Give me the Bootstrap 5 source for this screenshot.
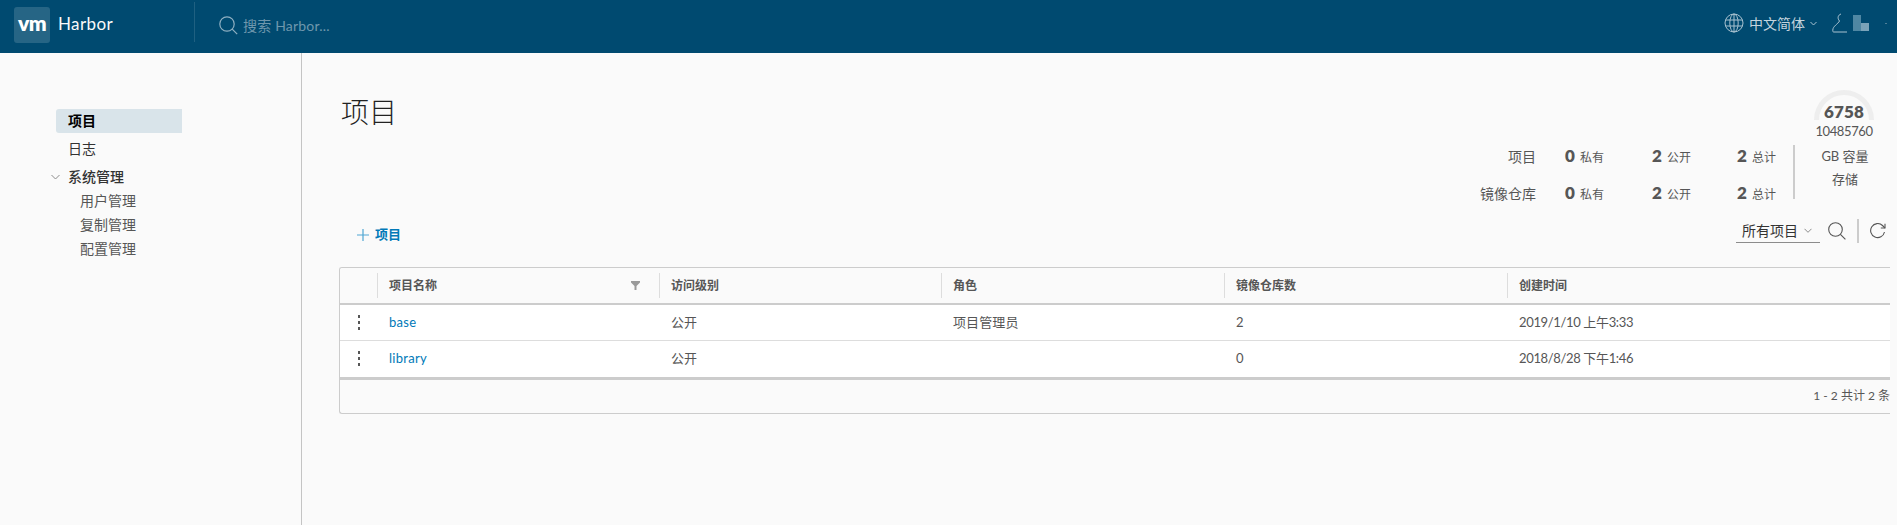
<!DOCTYPE html>
<html lang="zh">
<head>
<meta charset="utf-8">
<title>Harbor</title>
<link rel="stylesheet" href="https://cdn.jsdelivr.net/npm/bootstrap@5.3.0/dist/css/bootstrap.min.css">
<style>
html,body{height:525px;overflow:hidden}
body{background:#fafafa;color:#565656;font-family:Lato,"Noto Sans CJK SC",sans-serif;font-size:14px}
svg{display:block;flex:none}
.hb-top{height:53px;background:#004a70;padding:0}
.hb-logo{width:36px;height:36px;margin:5px 0 5px 14px;background:rgba(255,255,255,.15);border-radius:3px;color:#fff;font:800 21px/32px Lato,sans-serif;letter-spacing:-.5px;text-align:center}
.hb-name{margin-left:8px;color:#fafafa;font-size:17px;line-height:53px;width:136px;letter-spacing:.4px;margin-top:-3px}
.hb-vline{width:1px;height:40px;background:rgba(255,255,255,.12);margin-top:-6px}
.hb-search{margin-left:24px;color:#6e97ad;gap:5px;font-size:14px;letter-spacing:.2px}
.hb-lang{color:#c4d5de;gap:5px;font-size:14px}
.hb-user{margin-left:15px}
.hb-redact{width:16px;height:16px;margin-left:6px;display:grid;grid-template-columns:8px 8px;grid-template-rows:8px 8px}
.hb-redact i:nth-child(1){background:#4f87a3;grid-row:1/3}
.hb-redact i:nth-child(2){background:#004a70}
.hb-redact i:nth-child(3){background:#7aa3b9}
.hb-dot{width:2px;height:1px;background:#4f7f98;margin-left:16px;margin-right:10px}
.hb-wrap{height:472px}
.hb-side{width:302px;flex:none;border-right:1px solid #c4c4c4;padding:56px 0 0 56px}
.hb-link{display:block;height:24px;line-height:24px;padding-left:12px;width:126px;color:#333;text-decoration:none;font-size:14px;border-radius:3px 0 0 3px}
.hb-link.on{background:#d9e4ea;color:#000;font-weight:700}
.hb-link.gap{margin-top:4px}
.hb-link.sub{padding-left:24px;color:#565656}
.hb-group{margin-left:-5px;gap:8px;padding-left:0;font-weight:500}
.hb-main{flex:1;min-width:0;padding:36px 0 0 36px;overflow:hidden}
.hb-title{font-size:28px;font-weight:300;color:#222;line-height:40px;margin:3px 0 0 3px}
.hb-right{margin-right:2px}
.hb-gauge{position:relative;width:102px;height:56px;text-align:center}
.hb-gauge b{position:absolute;left:0;right:0;top:13px;font-size:17px;line-height:20px;color:#565656;font-weight:800;letter-spacing:.2px}
.hb-gauge span{position:absolute;left:0;right:0;top:33px;font-size:13px;line-height:18px;letter-spacing:-.4px}
.hb-stats{display:grid;grid-template-columns:129px 87px 85px 56px;grid-auto-rows:22px;row-gap:15px;width:357px}
.hb-stats .lb{padding-right:29px;text-align:right;font-size:14px;line-height:24px}
.hb-stats .ct{display:flex;align-items:baseline;gap:5px;font-size:12px;line-height:22px}
.hb-stats .ct b{font-size:17px;font-weight:800;width:10px}
.hb-cap{width:102px;height:54px;border-left:2px solid #ccc;text-align:center;font-size:13px;line-height:23px}
.hb-tools{height:24px;margin-top:15px;padding:0 11px 0 19px}
.hb-add{color:#0079b8;font-size:13px;font-weight:700;gap:6px;text-decoration:none;margin-top:8px}
.hb-sel{width:84px;height:23px;border-bottom:1px solid #8c8c8c;color:#333;font-size:14px;padding-left:6px;gap:6px;line-height:21px;margin-right:8px}
.hb-sep{width:2px;height:24px;background:#ccc;margin:0 11px 0 11px}
.hb-tablewrap{margin:24px 7px 0 1px;border:1px solid #ccc;border-right:0;border-radius:3px 0 0 3px;height:147px;overflow:hidden}
.table.hb-grid{table-layout:fixed;width:1550px;margin:0;--bs-table-bg:transparent;--bs-table-color:#565656;font-size:13px}
.table.hb-grid>*>*>*{padding:0;border:0;vertical-align:middle}
.table.hb-grid>thead>tr>th{height:36px;background:#fafafa;border-bottom:2px solid #ccc;font-size:12px;font-weight:700;color:#565656}
.hb-grid thead th div{height:25px;padding-left:11px;line-height:25px;border-left:1px solid #ddd;display:flex;justify-content:space-between;align-items:center}
.table.hb-grid>tbody>tr>td{height:36px;background:#fff;border-bottom:1px solid #ddd;padding-left:12px;letter-spacing:.1px}
.table.hb-grid>tbody>tr:last-child>td{border-bottom:3px solid #ccc;height:38px}
.table.hb-grid>tbody>tr>td.hb-k{padding-left:18px}
.table.hb-grid>tbody>tr>td.hb-date{letter-spacing:-.35px}
.hb-grid a{color:#0079b8;text-decoration:none;letter-spacing:.3px}
.hb-filter{margin-right:19px}
.hb-kebab{display:flex;flex-direction:column;gap:3px;width:3px}
.hb-kebab i{width:2px;height:3px;background:#565656}
.hb-foot{height:34px;line-height:32px;text-align:right;font-size:12px}
</style>
</head>
<body>
<nav class="navbar hb-top align-items-start flex-nowrap">
  <div class="d-flex align-items-center">
    <div class="hb-logo">vm</div>
    <div class="hb-name">Harbor</div>
    <div class="hb-vline"></div>
    <div class="hb-search d-flex align-items-center">
      <svg width="19" height="19" viewBox="0 0 19 19" fill="none" stroke="#8fb0c2" stroke-width="1.2"><circle cx="8" cy="8" r="7.2"/><path d="M13.2 13.2l5 5"/></svg>
      <span>搜索 Harbor...</span>
    </div>
  </div>
  <div class="d-flex align-items-center" style="height:46px">
    <div class="hb-lang d-flex align-items-center">
      <svg width="20" height="20" viewBox="0 0 20 20" fill="none" stroke="#a9c2d0" stroke-width="1"><circle cx="10" cy="10" r="9"/><ellipse cx="10" cy="10" rx="4.2" ry="9"/><path d="M10 1v18M1.6 7h16.8M1.6 13h16.8"/></svg>
      <span>中文简体</span>
      <svg width="7" height="5" viewBox="0 0 7 5" fill="none" stroke="#a9c2d0"><path d="M.5 1l3 3 3-3"/></svg>
    </div>
    <svg class="hb-user" width="15" height="20" viewBox="0 0 15 20" fill="none" stroke="#a9c2d0" stroke-width="1"><path d="M9 1C6 2 5 5 7.5 8 6 11 1 13 .8 17c0 1 0 2 .7 2H15"/></svg>
    <div class="hb-redact"><i></i><i></i><i></i></div>
    <div class="hb-dot"></div>
  </div>
</nav>
<div class="hb-wrap d-flex">
  <aside class="hb-side">
    <nav class="nav flex-column">
      <a class="hb-link on" href="#">项目</a>
      <a class="hb-link gap" href="#">日志</a>
      <a class="hb-link gap hb-group d-flex align-items-center" href="#"><svg width="9" height="6" viewBox="0 0 9 6" fill="none" stroke="#8c8c8c"><path d="M.5 1l4 4 4-4"/></svg><span>系统管理</span></a>
      <a class="hb-link sub" href="#">用户管理</a>
      <a class="hb-link sub" href="#">复制管理</a>
      <a class="hb-link sub" href="#">配置管理</a>
    </nav>
  </aside>
  <main class="hb-main">
    <div class="d-flex justify-content-between align-items-start">
      <h1 class="hb-title">项目</h1>
      <div class="hb-right d-flex flex-column align-items-end">
        <div class="hb-gauge">
          <svg class="mx-auto" width="62" height="31" viewBox="0 0 62 31" fill="none" stroke="#eee" stroke-width="5"><path d="M3.5 31a27.500 27.500 0 0 1 55 0"/></svg>
          <b>6758</b><span>10485760</span>
        </div>
        <div class="d-flex align-items-start">
          <div class="hb-stats">
            <div class="lb">项目</div>
            <div class="ct"><b>0</b><span>私有</span></div>
            <div class="ct"><b>2</b><span>公开</span></div>
            <div class="ct"><b>2</b><span>总计</span></div>
            <div class="lb">镜像仓库</div>
            <div class="ct"><b>0</b><span>私有</span></div>
            <div class="ct"><b>2</b><span>公开</span></div>
            <div class="ct"><b>2</b><span>总计</span></div>
          </div>
          <div class="hb-cap"><div>GB 容量</div><div>存储</div></div>
        </div>
      </div>
    </div>
    <div class="hb-tools d-flex justify-content-between align-items-center">
      <a class="hb-add d-flex align-items-center" href="#"><svg width="12" height="12" viewBox="0 0 12 12" fill="none" stroke="#4fa6d3" stroke-width="1.2"><path d="M6 0v12M0 6h12"/></svg><span>项目</span></a>
      <div class="d-flex align-items-center">
        <div class="hb-sel d-flex align-items-center"><span>所有项目</span><svg width="8" height="5" viewBox="0 0 8 5" fill="none" stroke="#8c8c8c"><path d="M.5.8l3.500 3.500L7.500.8"/></svg></div>
        <svg width="18" height="18" viewBox="0 0 18 18" fill="none" stroke="#565656" stroke-width="1.100"><circle cx="7.500" cy="7.500" r="6.800"/><path d="M12.400 12.400l5 5"/></svg>
        <div class="hb-sep"></div>
        <svg width="16" height="16" viewBox="0 0 16 16" fill="none" stroke="#565656" stroke-width="1.100"><path d="M14.500 9a7 7 0 1 1-2-6.500l2.500 2.500"/><path d="M15 .8V5h-4.200"/></svg>
      </div>
    </div>
    <div class="hb-tablewrap">
      <table class="table hb-grid">
        <colgroup><col style="width:37px"><col style="width:282px"><col style="width:282px"><col style="width:283px"><col style="width:283px"><col></colgroup>
        <thead><tr>
          <th></th>
          <th><div>项目名称<svg class="hb-filter" width="9" height="9" viewBox="0 0 9 9" fill="#9a9a9a"><path d="M0 0h9v1.500L5.500 5v4h-2V5L0 1.500z"/></svg></div></th>
          <th><div>访问级别</div></th>
          <th><div>角色</div></th>
          <th><div>镜像仓库数</div></th>
          <th><div>创建时间</div></th>
        </tr></thead>
        <tbody>
          <tr><td class="hb-k"><div class="hb-kebab"><i></i><i></i><i></i></div></td><td><a href="#">base</a></td><td>公开</td><td>项目管理员</td><td>2</td><td class="hb-date">2019/1/10 上午3:33</td></tr>
          <tr><td class="hb-k"><div class="hb-kebab"><i></i><i></i><i></i></div></td><td><a href="#">library</a></td><td>公开</td><td></td><td>0</td><td class="hb-date">2018/8/28 下午1:46</td></tr>
        </tbody>
      </table>
      <div class="hb-foot">1 - 2 共计 2 条</div>
    </div>
  </main>
</div>
<script src="https://cdn.jsdelivr.net/npm/bootstrap@5.3.0/dist/js/bootstrap.bundle.min.js"></script>
</body>
</html>
